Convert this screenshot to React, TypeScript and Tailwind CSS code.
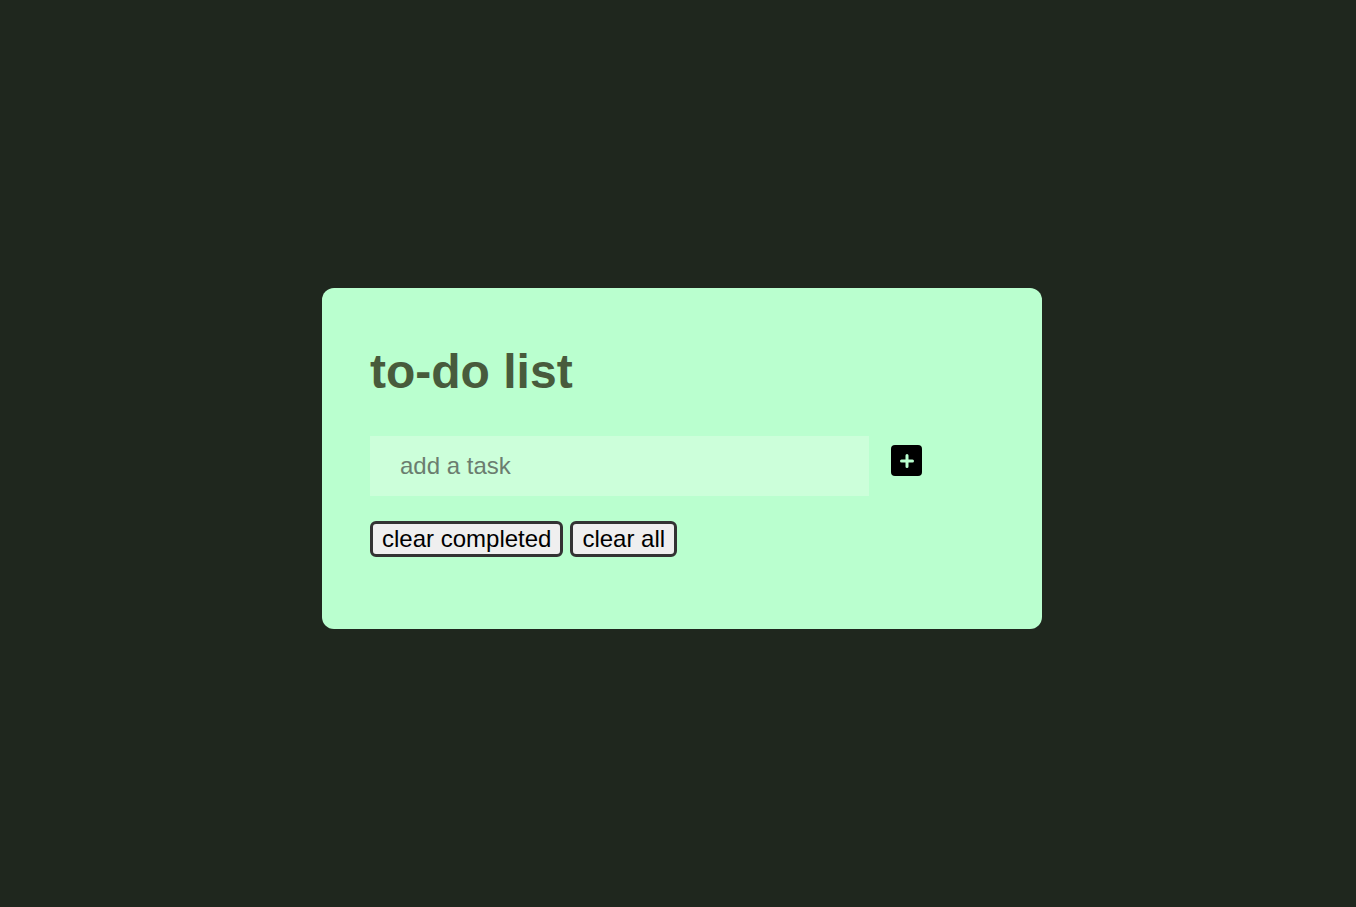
import React from "react";

export default function App() {
  return (
    <div className="min-h-[907px] w-full bg-[#1f271e] flex items-center justify-center" style={{ fontFamily: '"Liberation Sans", Arial, sans-serif' }}>
      <div className="w-[720px] h-[341px] rounded-[12px] bg-[#baffcf] px-[48px] pt-[56px] ml-[8px] mt-[10px]">
        <h1 className="text-[48px] leading-[56px] font-bold text-[#485b3c]">to-do list</h1>
        <div className="flex items-start mt-[36px]">
          <input
            placeholder="add a task"
            className="w-[499px] h-[60px] bg-[#ccffda] px-[30px] text-[24px] text-black placeholder:text-[#6b7d6f] outline-none"
          />
          <button className="ml-[22px] mt-[9px] w-[31px] h-[31px] rounded-[4px] bg-black flex items-center justify-center">
            <svg width="16" height="16" viewBox="0 0 16 16">
              <path d="M8 2.5v11M2.5 8h11" stroke="#baffcf" strokeWidth="3" strokeLinecap="round" />
            </svg>
          </button>
        </div>
        <div className="flex gap-[7px] mt-[25px]">
          <button className="h-[36px] px-[9px] rounded-[6px] border-[3px] border-[#333] bg-[#efefef] text-[24px] text-black leading-none">clear completed</button>
          <button className="h-[36px] px-[9px] rounded-[6px] border-[3px] border-[#333] bg-[#efefef] text-[24px] text-black leading-none">clear all</button>
        </div>
      </div>
    </div>
  );
}
